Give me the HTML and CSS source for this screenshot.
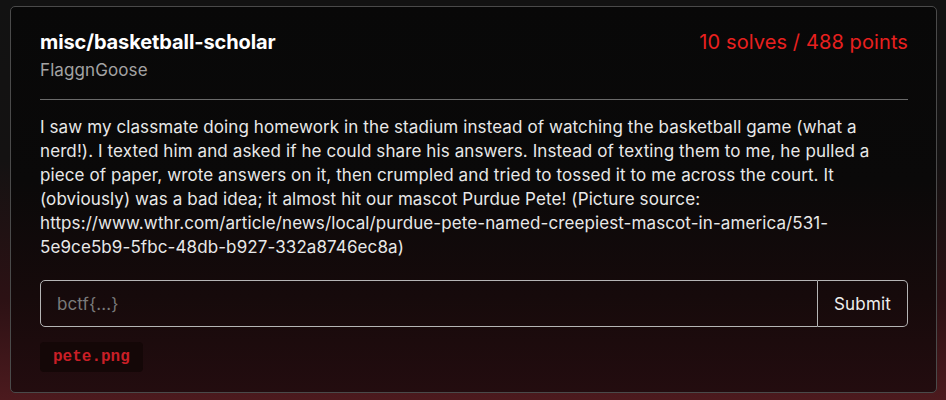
FILE: index.html
```html
<!DOCTYPE html>
<html>
<head>
<meta charset="utf-8">
<link rel="stylesheet" href="styles.css">
</head>
<body>
<div class="card">
  <div class="head">
    <div class="titles">
      <div class="title">misc/basketball-scholar</div>
      <div class="author">FlaggnGoose</div>
    </div>
    <div class="score">10 solves / 488 points</div>
  </div>
  <hr class="rule">
  <p class="desc">I saw my classmate doing homework in the stadium instead of watching the basketball game (what a nerd!). I texted him and asked if he could share his answers. Instead of texting them to me, he pulled a piece of paper, wrote answers on it, then crumpled and tried to tossed it to me across the court. It (obviously) was a bad idea; it almost hit our mascot Purdue Pete! (Picture source: https://www.wthr.com/article/news/local/purdue-pete-named-creepiest-mascot-in-america/531-5e9ce5b9-5fbc-48db-b927-332a8746ec8a)</p>
  <form class="flag">
    <input class="flag-input" type="text" placeholder="bctf{...}">
    <button class="flag-btn" type="button">Submit</button>
  </form>
  <div class="files">
    <span class="file">pete.png</span>
  </div>
</div>
</body>
</html>
```
FILE: styles.css
```css
html, body {
  margin: 0;
  height: 100%;
}
body {
  background: linear-gradient(180deg, #121212 0%, #141212 40%, #2c1114 75%, #4c1a1e 100%);
  font-family: Inter, "Noto Sans", sans-serif;
  color: #e6e6e6;
  padding: 6px 9px 0 10px;
  box-sizing: border-box;
}
.card {
  border: 1px solid #4a4a4a;
  border-radius: 5px;
  background: linear-gradient(180deg, #080808 0%, #0a0909 45%, #160a0b 75%, #230c0f 100%);
  padding: 21px 28px 19px 29px;
  height: 387px;
  box-sizing: border-box;
}
.head {
  display: flex;
  justify-content: space-between;
  align-items: flex-start;
}
.title {
  font-size: 20px;
  line-height: 28px;
  font-weight: 700;
  letter-spacing: -0.1px;
  color: #ffffff;
}
.author {
  font-size: 17px;
  line-height: 24px;
  letter-spacing: 0.1px;
  color: #a3a3a3;
  margin-top: 2px;
}
.score {
  font-size: 20px;
  line-height: 28px;
  letter-spacing: 0.1px;
  color: #e8201f;
}
.rule {
  border: 0;
  border-top: 1px solid #6a6a6a;
  margin: 17px 0 15px;
}
.desc {
  margin: 0;
  font-size: 17px;
  line-height: 24px;
  letter-spacing: 0.1px;
  color: #e8e8e8;
}
.flag {
  display: flex;
  margin: 21px 0 0;
  height: 47px;
}
.flag-input {
  flex: 1;
  background: transparent;
  border: 1px solid #b5b5b5;
  border-radius: 5px 0 0 5px;
  padding: 0 16px;
  font-family: Inter, sans-serif;
  font-size: 17px;
  letter-spacing: 0.1px;
  color: #e6e6e6;
  outline: none;
}
.flag-input::placeholder {
  color: #7a7a7a;
}
.flag-btn {
  width: 90px;
  background: transparent;
  border: 1px solid #b5b5b5;
  border-left: 0;
  border-radius: 0 5px 5px 0;
  font-family: Inter, sans-serif;
  font-size: 17px;
  letter-spacing: 0.2px;
  color: #eeeeee;
}
.files {
  display: flex;
  margin-top: 15px;
}
.file {
  display: inline-block;
  background: #140707;
  border-radius: 4px;
  padding: 0 13px;
  height: 30px;
  line-height: 30px;
  font-family: "Liberation Mono", monospace;
  font-weight: 700;
  font-size: 16px;
  color: #c91f26;
}
```
